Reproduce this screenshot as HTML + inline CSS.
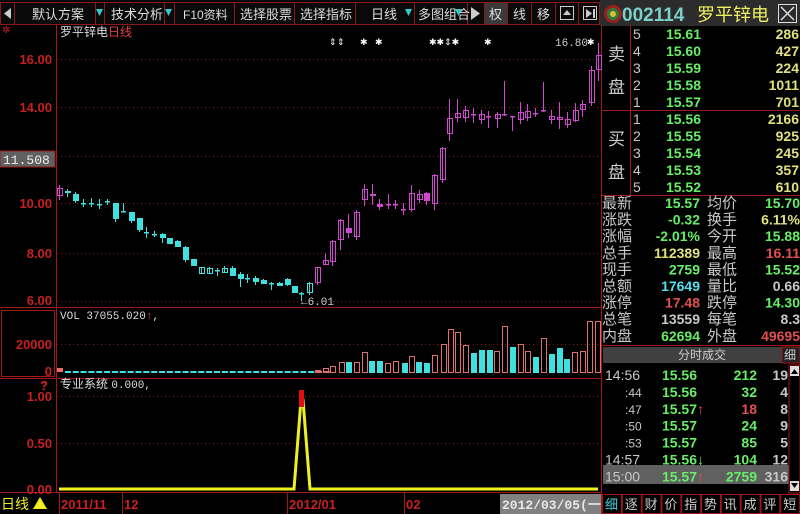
<!DOCTYPE html>
<html><head><meta charset="utf-8">
<style>
html,body{margin:0;padding:0;background:#000;width:800px;height:514px;overflow:hidden;}
body{font-family:"Liberation Sans","WenQuanYi Zen Hei","Noto Sans CJK SC",sans-serif;}
svg text{font-family:"Liberation Sans","WenQuanYi Zen Hei","Noto Sans CJK SC",sans-serif;}
.m{font-family:"Liberation Mono","WenQuanYi Zen Hei",monospace;}
</style></head><body>
<svg id="s" width="800" height="514" viewBox="0 0 800 514" xmlns="http://www.w3.org/2000/svg">
<rect width="800" height="514" fill="#000"/>
<rect x="0" y="0" width="600" height="25" fill="#0a0a0a"/>
<g stroke="#8a1a1a" stroke-width="1" fill="none">
<rect x="0.5" y="2.5" width="599" height="22"/>
<line x1="14.5" y1="2" x2="14.5" y2="25"/><line x1="104.5" y1="2" x2="104.5" y2="25"/>
<line x1="174.5" y1="2" x2="174.5" y2="25"/><line x1="234.5" y1="2" x2="234.5" y2="25"/>
<line x1="294.5" y1="2" x2="294.5" y2="25"/><line x1="355.5" y1="2" x2="355.5" y2="25"/>
<line x1="414.5" y1="2" x2="414.5" y2="25"/><line x1="467.5" y1="2" x2="467.5" y2="25"/>
<line x1="484.5" y1="2" x2="484.5" y2="25"/><line x1="507.5" y1="2" x2="507.5" y2="25"/>
<line x1="531.5" y1="2" x2="531.5" y2="25"/><line x1="555.5" y1="2" x2="555.5" y2="25"/>
<line x1="578.5" y1="2" x2="578.5" y2="25"/>
</g>
<rect x="485" y="3" width="22" height="21" fill="#3a3a3a"/>
<polygon points="11,8 11,19 4,13.5" fill="#ccc"/>
<g fill="#ddd" font-size="13">
<text x="32" y="19">默认方案</text>
<text x="111" y="19">技术分析</text>
<text x="183" y="19" font-size="12">F10资料</text>
<text x="240" y="19">选择股票</text>
<text x="300" y="19">选择指标</text>
<text x="371" y="19">日线</text>
<text x="418" y="19">多图组合</text>
<text x="489" y="19">权</text>
<text x="513" y="19">线</text>
<text x="537" y="19">移</text>
</g>
<g fill="#3cc">
<polygon points="96,9 103,9 99.5,16"/><polygon points="165,9 172,9 168.5,16"/>
<polygon points="405,9 412,9 408.5,16"/><polygon points="455,9 462,9 458.5,16"/>
</g>
<rect x="95" y="3" width="1" height="21" fill="#8a1a1a"/><rect x="164" y="3" width="1" height="21" fill="#8a1a1a"/>
<polygon points="471,7 471,20 480,13.5" fill="#ccc"/>
<rect x="560.5" y="6.5" width="13" height="13" fill="none" stroke="#ccc"/><polygon points="563,15 571,15 567,10" fill="#ccc"/>
<rect x="583.5" y="6.5" width="13" height="13" fill="none" stroke="#ccc"/><polygon points="586,9 586,18 592,13.5" fill="#ccc"/><rect x="593" y="9" width="2" height="9" fill="#ccc"/>
<rect x="600" y="0" width="200" height="26" fill="#2c2c2c"/>
<circle cx="613" cy="14" r="9" fill="#9a2020"/><circle cx="613" cy="14" r="6" fill="#2a7a3a"/><circle cx="613" cy="14" r="3" fill="#d8c030"/>
<text x="622" y="21" font-size="19" fill="#7ad0c8" font-weight="bold">002114</text>
<text x="697" y="21" font-size="18" fill="#f0f060">罗平锌电</text>
<rect x="778.5" y="4.5" width="18" height="18" fill="none" stroke="#ddd"/>
<path d="M781 7 L794 20 M794 7 L781 20" stroke="#ddd" stroke-width="1.5"/>
<g stroke="#a01818" fill="none">
<line x1="56.5" y1="25" x2="56.5" y2="492"/>
<line x1="601.5" y1="25" x2="601.5" y2="514"/>
<line x1="0" y1="307.5" x2="601" y2="307.5"/>
<line x1="0" y1="378.5" x2="601" y2="378.5"/>
<line x1="0" y1="492.5" x2="601" y2="492.5"/>
<rect x="1.5" y="310.5" width="53" height="66"/>
</g>
<g stroke="#7a1a1a" stroke-dasharray="1,3">
<line x1="57" y1="59.5" x2="600" y2="59.5"/><line x1="57" y1="107.5" x2="600" y2="107.5"/>
<line x1="57" y1="156.5" x2="600" y2="156.5"/><line x1="57" y1="203.5" x2="600" y2="203.5"/>
<line x1="57" y1="253.5" x2="600" y2="253.5"/><line x1="57" y1="301.5" x2="600" y2="301.5"/>
<line x1="57" y1="344.5" x2="600" y2="344.5"/>
<line x1="57" y1="396.5" x2="600" y2="396.5"/><line x1="57" y1="443.5" x2="600" y2="443.5"/>
</g>
<g fill="#c82020" font-size="13" font-weight="bold" text-anchor="end" class="m">
<text x="52" y="64">16.00</text><text x="52" y="112">14.00</text>
<text x="52" y="208">10.00</text><text x="52" y="258">8.00</text><text x="52" y="305">6.00</text>
<text x="52" y="349">20000</text><text x="52" y="376">0</text>
<text x="52" y="401">1.00</text><text x="52" y="448">0.50</text><text x="52" y="494">0.00</text>
</g>
<rect x="0" y="151" width="55" height="16" fill="#606060" stroke="#a01818"/>
<text x="3" y="164" font-size="13" fill="#eee" class="m">11.508</text>
<text x="2" y="33" font-size="10" fill="#d02020">✲</text>
<text x="60" y="36" font-size="12" fill="#ddd">罗平锌电<tspan fill="#e04040">日线</tspan></text>
<g fill="#fff" font-size="9"><text x="329" y="45">⇕</text><text x="337" y="45">⇕</text><text x="360" y="45">✱</text><text x="375" y="45">✱</text><text x="429" y="45">✱✱⇕✱</text><text x="484" y="45">✱</text><text x="587" y="45">✱</text></g>
<text x="555" y="46" font-size="11" fill="#ccc" class="m">16.80</text>
<text x="301" y="305" font-size="11" fill="#ccc" class="m">←6.01</text>
<text x="60" y="319" font-size="11" fill="#ddd" class="m">VOL 37055.020<tspan fill="#e04040">↑</tspan>,</text>
<text x="60" y="388" font-size="12" fill="#ddd">专业系统 <tspan class="m" font-size="11">0.000,</tspan></text>
<text x="40" y="390" font-size="13" fill="#e02020" font-weight="bold">?</text>
<g id="candles"></g>
<g id="vols"></g>
<polyline points="59,489 294,489 301,400 303,400 310,489 598,489" fill="none" stroke="#f0f020" stroke-width="3"/>
<rect x="299" y="390" width="5" height="17" fill="#e01010"/>
<text x="1" y="509" font-size="14" fill="#f0f020">日线</text>
<polygon points="33,509 47,509 40,497" fill="#f0f020"/>
<g stroke="#a01818"><line x1="59.5" y1="493" x2="59.5" y2="514"/><line x1="122.5" y1="493" x2="122.5" y2="514"/><line x1="287.5" y1="493" x2="287.5" y2="514"/><line x1="404.5" y1="493" x2="404.5" y2="514"/></g>
<g fill="#c82020" font-size="13" font-weight="bold" class="m"><text x="61" y="509">2011/11</text><text x="124" y="509">12</text><text x="289" y="509">2012/01</text><text x="406" y="509">02</text></g>
<rect x="500" y="494" width="101" height="20" fill="#808080"/>
<text x="502" y="509" font-size="13" fill="#e8e8e8" font-weight="bold" class="m">2012/03/05(一)</text>
<g stroke="#a01818"><line x1="630.5" y1="25" x2="630.5" y2="195"/><line x1="602" y1="110.5" x2="800" y2="110.5"/><line x1="602" y1="195.5" x2="800" y2="195.5"/></g>
<g fill="#ccc" font-size="17"><text x="608" y="60">卖</text><text x="608" y="93">盘</text><text x="608" y="145">买</text><text x="608" y="178">盘</text></g>
<g id="ob" font-size="14" font-weight="bold"></g>
<g id="st" font-size="14"></g>
<rect x="603" y="347" width="179" height="16" fill="#404040"/>
<text x="678" y="359" font-size="12" fill="#ccc">分时成交</text>
<rect x="782" y="347" width="18" height="16" fill="#202020" stroke="#a01818"/>
<text x="784" y="359" font-size="12" fill="#ccc">细</text>
<rect x="603" y="465" width="186" height="19" fill="#606060"/>
<g id="tr" font-size="14" font-weight="bold"></g>
<rect x="789" y="365" width="11" height="128" fill="#000" stroke="#a01818"/>
<rect x="790" y="366" width="9" height="10" fill="#ddd"/><polygon points="791,374 798,374 794.5,369" fill="#000"/>
<rect x="790" y="481" width="9" height="10" fill="#ddd"/><polygon points="791,483 798,483 794.5,488" fill="#000"/>
<rect x="602" y="494" width="198" height="20" fill="#000"/>
<g id="tabs" font-size="13" fill="#ccc"></g>
</svg>
<script>
var NS="http://www.w3.org/2000/svg";
function el(p,t,a,txt){var e=document.createElementNS(NS,t);for(var k in a)e.setAttribute(k,a[k]);if(txt!=null)e.textContent=txt;document.getElementById(p).appendChild(e);return e;}
var C="#40e0e0",M="#d048d0";
var cd=[
[59,188,196,185,200,M,0],[67,191,193,189,197,C,1],[75,194,201,192,203,C,1],[83,203,204,199,207,C,1],[91,203,204,198,207,C,1],
[99,204,205,199,209,C,1],[107,201,202,199,205,C,1],[115,203,219,203,222,C,1],[123,211,212,203,212,C,1],[131,212,221,212,223,C,1],
[139,218,230,218,232,C,1],[146,232,233,227,238,C,1],[154,234,235,231,237,C,1],[162,234,238,233,243,C,1],[169,238,244,238,244,C,1],
[177,241,247,240,247,C,1],[185,247,260,246,262,C,1],[193,259,266,259,266,C,1],[201,267,274,267,274,C,0],[209,268,274,267,274,C,0],
[217,270,271,268,276,C,1],[224,268,273,266,273,C,0],[232,268,276,266,276,C,1],[240,274,279,272,287,C,1],[247,278,279,274,283,C,1],
[255,278,282,276,285,C,1],[263,280,284,279,284,C,1],[271,283,284,282,290,C,1],[279,283,286,282,286,C,1],[287,279,285,278,286,C,1],
[294,286,293,286,293,C,1],[301,293,294,292,301,C,1],[309,283,293,282,295,C,0],[317,267,283,267,285,M,0],[325,260,265,253,265,M,0],
[332,241,262,240,266,M,0],[340,220,240,219,250,M,0],[348,228,233,214,238,M,1],[356,212,237,210,240,M,0],[364,189,200,184,206,M,0],
[372,194,196,184,205,M,1],[379,204,207,199,210,M,1],[388,204,205,194,209,M,1],[395,204,205,200,209,M,1],[403,209,210,203,215,M,1],
[411,193,210,185,212,M,0],[419,194,200,190,203,M,0],[426,193,201,192,205,M,1],[434,175,204,174,210,M,0],[442,148,180,147,183,M,0],
[449,118,134,99,141,M,0],[457,113,118,99,122,M,0],[465,110,118,106,122,M,0],[473,114,115,108,123,M,1],[481,114,120,110,124,M,0],
[488,116,117,111,128,M,1],[497,114,119,112,128,M,0],[504,114,115,81,116,M,1],[512,116,117,116,131,M,1],[520,112,120,102,124,M,0],
[527,111,118,104,121,M,0],[535,113,114,108,117,M,1],[543,110,111,82,112,M,1],[551,116,120,110,124,M,0],[559,117,120,102,129,M,0],
[567,119,125,112,128,M,0],[575,110,121,103,122,M,0],[582,104,110,100,117,M,0],[591,70,103,66,106,M,0],[598,55,70,43,81,M,0]];
cd.forEach(function(c){
 el("candles","line",{x1:c[0]+.5,y1:c[3],x2:c[0]+.5,y2:c[4],stroke:c[5],"stroke-width":1});
 var h=c[2]-c[1];
 if(h<=1){el("candles","rect",{x:c[0]-2,y:c[1],width:5,height:1.5,fill:c[5]});}
 else if(c[6]){el("candles","rect",{x:c[0]-2,y:c[1],width:6,height:h,fill:c[5]});}
 else{el("candles","rect",{x:c[0]-1.5,y:c[1]+.5,width:5,height:h-1,fill:"none",stroke:c[5]});}
});
var vb=372, P="#e07070";
for(var i=0;i<35;i++){var x=59+i*7.85;var col=(cd[i]&&cd[i][5]==M)?P:C;el("vols","rect",{x:x-2,y:vb-(i==0?4:1),width:6,height:(i==0?4:2),fill:col});}
var vv=[[317,370,P],[325,368,P],[332,366,P],[341,362,P],[348,362,C],[356,362,P],[364,352,P],[371,361,C],[379,361,C],[387,363,P],[395,361,P],[404,363,C],[411,356,P],[418,362,C],[426,363,C],[434,355,P],[443,344,P],[450,329,P],[457,332,P],[465,345,P],[473,353,C],[481,350,C],[489,350,C],[496,351,P],[504,326,P],[512,347,C],[520,344,P],[527,351,P],[535,357,C],[543,338,P],[551,354,C],[559,348,C],[566,359,C],[574,352,P],[582,351,P],[589,321,P],[597,321,P]];
vv.forEach(function(v){if(v[2]==C)el("vols","rect",{x:v[0]-2,y:v[1],width:6,height:vb-v[1]+1,fill:C});else el("vols","rect",{x:v[0]-1.5,y:v[1]+.5,width:5,height:vb-v[1],fill:"none",stroke:P});});
var G="#66ee66",Y="#e0e080",R="#e05050",W="#c8c8c8",CY="#50e0f0";
var ob=[["5","15.61","286"],["4","15.60","427"],["3","15.59","224"],["2","15.58","1011"],["1","15.57","701"],["1","15.56","2166"],["2","15.55","925"],["3","15.54","245"],["4","15.53","357"],["5","15.52","610"]];
var oy=[39,56,73,90,107,124,141,158,175,192];
ob.forEach(function(r,i){el("ob","text",{x:633,y:oy[i],fill:W,"font-weight":"normal"},r[0]);el("ob","text",{x:701,y:oy[i],fill:G,"text-anchor":"end"},r[1]);el("ob","text",{x:799,y:oy[i],fill:Y,"text-anchor":"end"},r[2]);});
var st=[["最新","15.57",G,"均价","15.70",G],["涨跌","-0.32",G,"换手","6.11%",Y],["涨幅","-2.01%",G,"今开","15.88",G],["总手","112389",Y,"最高","16.11",R],["现手","2759",G,"最低","15.52",G],["总额","17649",CY,"量比","0.66",W],["涨停","17.48",R,"跌停","14.30",G],["总笔","13559",W,"每笔","8.3",W],["内盘","62694",G,"外盘","49695",R]];
st.forEach(function(r,i){var y=208+i*16.6;el("st","text",{x:602,y:y,fill:W,"font-size":15},r[0]);el("st","text",{x:700,y:y,fill:r[2],"text-anchor":"end","font-weight":"bold"},r[1]);el("st","text",{x:707,y:y,fill:W,"font-size":15},r[3]);el("st","text",{x:800,y:y,fill:r[5],"text-anchor":"end","font-weight":"bold"},r[4]);});
el("st","line",{x1:602,y1:345.5,x2:800,y2:345.5,stroke:"#a01818"});
var tr=[["14:56","15.56","",G,"212","19",1],[":44","15.56","",G,"32","4",0],[":47","15.57","↑",R,"18","8",0],[":50","15.57","",G,"24","9",0],[":53","15.57","",G,"85","5",0],["14:57","15.56","↓",G,"104","12",1],["15:00","15.57","↑",G,"2759","316",1]];
tr.forEach(function(r,i){var y=380+i*16.9;
 el("tr","text",{x:r[6]?605:625,y:y,fill:W,"font-weight":"normal","font-size":r[6]?14:12},r[0]);
 el("tr","text",{x:697,y:y,fill:G,"text-anchor":"end"},r[1]);
 if(r[2])el("tr","text",{x:697,y:y,fill:r[2]=="↓"?G:R},r[2]);
 el("tr","text",{x:757,y:y,fill:r[3],"text-anchor":"end"},r[4]);
 el("tr","text",{x:788,y:y,fill:W,"text-anchor":"end"},r[5]);});
var tb="细逐财价指势讯成评短";
for(var j=0;j<10;j++){var x=602+j*19.8;el("tabs","rect",{x:x+.5,y:494.5,width:19,height:19,fill:"#000",stroke:"#a01818"});el("tabs","text",{x:x+3,y:509,fill:j==0?"#40d0e0":"#ccc"},tb[j]);}
</script>
</body></html>
